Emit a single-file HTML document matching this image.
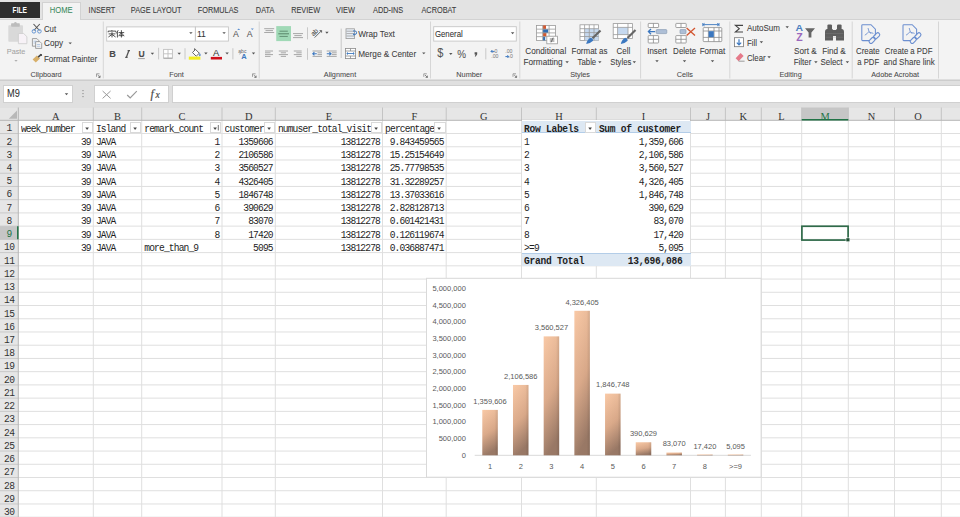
<!DOCTYPE html><html><head><meta charset="utf-8"><style>
*{margin:0;padding:0;box-sizing:border-box}
html,body{width:960px;height:517px;overflow:hidden;background:#fff}
body{position:relative;font-family:"Liberation Sans",sans-serif;color:#444}
.a{position:absolute}
.t{position:absolute;white-space:nowrap;font-size:8px;line-height:10px;color:#444}
.c{position:absolute;white-space:nowrap;font-family:"Liberation Mono",monospace;font-size:9.6px;letter-spacing:-0.85px;line-height:13px;color:#1e1e1e;transform:scaleY(1.14);transform-origin:0 9.06px}
.b{font-weight:bold}
.ct{position:absolute;white-space:nowrap;font-size:7.5px;line-height:9px;color:#595959;text-align:center}
</style></head><body>
<div class="a" style="left:0;top:0;width:960px;height:19px;background:#e3e3e3"></div>
<div class="a" style="left:0;top:2px;width:40px;height:16px;background:#2e2e2e"></div>
<div class="a" style="left:42px;top:1.5px;width:39px;height:18px;background:#f3f3f3;border:1px solid #d2d2d2;border-bottom:none"></div>
<div class="a" style="left:0;top:19px;width:960px;height:61px;background:#f3f3f3;border-top:1px solid #d2d2d2"></div>
<div class="a" style="left:0;top:80px;width:960px;height:28px;background:#e0e0e0"></div>
<div class="a" style="left:43px;top:17px;width:37px;height:3px;background:#f3f3f3"></div>
<svg class="a" style="left:0;top:0" width="960" height="90"><rect x="0" y="79.5" width="960" height="1.3" fill="#c9c9c9"/></svg>
<div class="a" style="left:3px;top:85.2px;width:70px;height:17.8px;background:#fff;border:1px solid #d0d0d0"></div>
<div class="a" style="left:94px;top:85.2px;width:75px;height:17.8px;background:#fff;border:1px solid #d0d0d0"></div>
<div class="a" style="left:171.5px;top:85.2px;width:790px;height:17.8px;background:#fff;border:1px solid #d0d0d0"></div>
<div class="a" style="left:0;top:107.5px;width:960px;height:12.799999999999997px;background:#e6e6e6"></div>
<div class="a" style="left:0;top:120.3px;width:18.3px;height:396.7px;background:#e6e6e6"></div>
<svg class="a" style="left:0;top:0" width="960" height="517">
<rect x="801.7" y="107.5" width="46.59999999999991" height="12.799999999999997" fill="#c6c6c6"/>
<rect x="0" y="226.14" width="18.3" height="13.23" fill="#c6c6c6"/>
<line x1="93.3" y1="120.3" x2="93.3" y2="517" stroke="#dfdfdf" stroke-width="1"/>
<line x1="93.3" y1="107.5" x2="93.3" y2="120.3" stroke="#c4c4c4" stroke-width="1"/>
<line x1="141.7" y1="120.3" x2="141.7" y2="517" stroke="#dfdfdf" stroke-width="1"/>
<line x1="141.7" y1="107.5" x2="141.7" y2="120.3" stroke="#c4c4c4" stroke-width="1"/>
<line x1="222.0" y1="120.3" x2="222.0" y2="517" stroke="#dfdfdf" stroke-width="1"/>
<line x1="222.0" y1="107.5" x2="222.0" y2="120.3" stroke="#c4c4c4" stroke-width="1"/>
<line x1="275.3" y1="120.3" x2="275.3" y2="517" stroke="#dfdfdf" stroke-width="1"/>
<line x1="275.3" y1="107.5" x2="275.3" y2="120.3" stroke="#c4c4c4" stroke-width="1"/>
<line x1="382.5" y1="120.3" x2="382.5" y2="517" stroke="#dfdfdf" stroke-width="1"/>
<line x1="382.5" y1="107.5" x2="382.5" y2="120.3" stroke="#c4c4c4" stroke-width="1"/>
<line x1="446.2" y1="120.3" x2="446.2" y2="517" stroke="#dfdfdf" stroke-width="1"/>
<line x1="446.2" y1="107.5" x2="446.2" y2="120.3" stroke="#c4c4c4" stroke-width="1"/>
<line x1="521.5" y1="120.3" x2="521.5" y2="517" stroke="#dfdfdf" stroke-width="1"/>
<line x1="521.5" y1="107.5" x2="521.5" y2="120.3" stroke="#c4c4c4" stroke-width="1"/>
<line x1="596.3" y1="120.3" x2="596.3" y2="517" stroke="#dfdfdf" stroke-width="1"/>
<line x1="596.3" y1="107.5" x2="596.3" y2="120.3" stroke="#c4c4c4" stroke-width="1"/>
<line x1="690.5" y1="120.3" x2="690.5" y2="517" stroke="#dfdfdf" stroke-width="1"/>
<line x1="690.5" y1="107.5" x2="690.5" y2="120.3" stroke="#c4c4c4" stroke-width="1"/>
<line x1="725.4" y1="120.3" x2="725.4" y2="517" stroke="#dfdfdf" stroke-width="1"/>
<line x1="725.4" y1="107.5" x2="725.4" y2="120.3" stroke="#c4c4c4" stroke-width="1"/>
<line x1="761.3" y1="120.3" x2="761.3" y2="517" stroke="#dfdfdf" stroke-width="1"/>
<line x1="761.3" y1="107.5" x2="761.3" y2="120.3" stroke="#c4c4c4" stroke-width="1"/>
<line x1="801.7" y1="120.3" x2="801.7" y2="517" stroke="#dfdfdf" stroke-width="1"/>
<line x1="801.7" y1="107.5" x2="801.7" y2="120.3" stroke="#c4c4c4" stroke-width="1"/>
<line x1="848.3" y1="120.3" x2="848.3" y2="517" stroke="#dfdfdf" stroke-width="1"/>
<line x1="848.3" y1="107.5" x2="848.3" y2="120.3" stroke="#c4c4c4" stroke-width="1"/>
<line x1="894.5" y1="120.3" x2="894.5" y2="517" stroke="#dfdfdf" stroke-width="1"/>
<line x1="894.5" y1="107.5" x2="894.5" y2="120.3" stroke="#c4c4c4" stroke-width="1"/>
<line x1="941.3" y1="120.3" x2="941.3" y2="517" stroke="#dfdfdf" stroke-width="1"/>
<line x1="941.3" y1="107.5" x2="941.3" y2="120.3" stroke="#c4c4c4" stroke-width="1"/>
<line x1="18.3" y1="133.53" x2="960" y2="133.53" stroke="#dfdfdf" stroke-width="1"/>
<line x1="0" y1="133.53" x2="18.3" y2="133.53" stroke="#c8c8c8" stroke-width="1"/>
<line x1="18.3" y1="146.76" x2="960" y2="146.76" stroke="#dfdfdf" stroke-width="1"/>
<line x1="0" y1="146.76" x2="18.3" y2="146.76" stroke="#c8c8c8" stroke-width="1"/>
<line x1="18.3" y1="159.98999999999998" x2="960" y2="159.98999999999998" stroke="#dfdfdf" stroke-width="1"/>
<line x1="0" y1="159.98999999999998" x2="18.3" y2="159.98999999999998" stroke="#c8c8c8" stroke-width="1"/>
<line x1="18.3" y1="173.22" x2="960" y2="173.22" stroke="#dfdfdf" stroke-width="1"/>
<line x1="0" y1="173.22" x2="18.3" y2="173.22" stroke="#c8c8c8" stroke-width="1"/>
<line x1="18.3" y1="186.45" x2="960" y2="186.45" stroke="#dfdfdf" stroke-width="1"/>
<line x1="0" y1="186.45" x2="18.3" y2="186.45" stroke="#c8c8c8" stroke-width="1"/>
<line x1="18.3" y1="199.67999999999998" x2="960" y2="199.67999999999998" stroke="#dfdfdf" stroke-width="1"/>
<line x1="0" y1="199.67999999999998" x2="18.3" y2="199.67999999999998" stroke="#c8c8c8" stroke-width="1"/>
<line x1="18.3" y1="212.91" x2="960" y2="212.91" stroke="#dfdfdf" stroke-width="1"/>
<line x1="0" y1="212.91" x2="18.3" y2="212.91" stroke="#c8c8c8" stroke-width="1"/>
<line x1="18.3" y1="226.14" x2="960" y2="226.14" stroke="#dfdfdf" stroke-width="1"/>
<line x1="0" y1="226.14" x2="18.3" y2="226.14" stroke="#c8c8c8" stroke-width="1"/>
<line x1="18.3" y1="239.36999999999998" x2="960" y2="239.36999999999998" stroke="#dfdfdf" stroke-width="1"/>
<line x1="0" y1="239.36999999999998" x2="18.3" y2="239.36999999999998" stroke="#c8c8c8" stroke-width="1"/>
<line x1="18.3" y1="252.6" x2="960" y2="252.6" stroke="#dfdfdf" stroke-width="1"/>
<line x1="0" y1="252.6" x2="18.3" y2="252.6" stroke="#c8c8c8" stroke-width="1"/>
<line x1="18.3" y1="265.83000000000004" x2="960" y2="265.83000000000004" stroke="#dfdfdf" stroke-width="1"/>
<line x1="0" y1="265.83000000000004" x2="18.3" y2="265.83000000000004" stroke="#c8c8c8" stroke-width="1"/>
<line x1="18.3" y1="279.06" x2="960" y2="279.06" stroke="#dfdfdf" stroke-width="1"/>
<line x1="0" y1="279.06" x2="18.3" y2="279.06" stroke="#c8c8c8" stroke-width="1"/>
<line x1="18.3" y1="292.29" x2="960" y2="292.29" stroke="#dfdfdf" stroke-width="1"/>
<line x1="0" y1="292.29" x2="18.3" y2="292.29" stroke="#c8c8c8" stroke-width="1"/>
<line x1="18.3" y1="305.52000000000004" x2="960" y2="305.52000000000004" stroke="#dfdfdf" stroke-width="1"/>
<line x1="0" y1="305.52000000000004" x2="18.3" y2="305.52000000000004" stroke="#c8c8c8" stroke-width="1"/>
<line x1="18.3" y1="318.75" x2="960" y2="318.75" stroke="#dfdfdf" stroke-width="1"/>
<line x1="0" y1="318.75" x2="18.3" y2="318.75" stroke="#c8c8c8" stroke-width="1"/>
<line x1="18.3" y1="331.98" x2="960" y2="331.98" stroke="#dfdfdf" stroke-width="1"/>
<line x1="0" y1="331.98" x2="18.3" y2="331.98" stroke="#c8c8c8" stroke-width="1"/>
<line x1="18.3" y1="345.21000000000004" x2="960" y2="345.21000000000004" stroke="#dfdfdf" stroke-width="1"/>
<line x1="0" y1="345.21000000000004" x2="18.3" y2="345.21000000000004" stroke="#c8c8c8" stroke-width="1"/>
<line x1="18.3" y1="358.44" x2="960" y2="358.44" stroke="#dfdfdf" stroke-width="1"/>
<line x1="0" y1="358.44" x2="18.3" y2="358.44" stroke="#c8c8c8" stroke-width="1"/>
<line x1="18.3" y1="371.67" x2="960" y2="371.67" stroke="#dfdfdf" stroke-width="1"/>
<line x1="0" y1="371.67" x2="18.3" y2="371.67" stroke="#c8c8c8" stroke-width="1"/>
<line x1="18.3" y1="384.90000000000003" x2="960" y2="384.90000000000003" stroke="#dfdfdf" stroke-width="1"/>
<line x1="0" y1="384.90000000000003" x2="18.3" y2="384.90000000000003" stroke="#c8c8c8" stroke-width="1"/>
<line x1="18.3" y1="398.13000000000005" x2="960" y2="398.13000000000005" stroke="#dfdfdf" stroke-width="1"/>
<line x1="0" y1="398.13000000000005" x2="18.3" y2="398.13000000000005" stroke="#c8c8c8" stroke-width="1"/>
<line x1="18.3" y1="411.36" x2="960" y2="411.36" stroke="#dfdfdf" stroke-width="1"/>
<line x1="0" y1="411.36" x2="18.3" y2="411.36" stroke="#c8c8c8" stroke-width="1"/>
<line x1="18.3" y1="424.59000000000003" x2="960" y2="424.59000000000003" stroke="#dfdfdf" stroke-width="1"/>
<line x1="0" y1="424.59000000000003" x2="18.3" y2="424.59000000000003" stroke="#c8c8c8" stroke-width="1"/>
<line x1="18.3" y1="437.82000000000005" x2="960" y2="437.82000000000005" stroke="#dfdfdf" stroke-width="1"/>
<line x1="0" y1="437.82000000000005" x2="18.3" y2="437.82000000000005" stroke="#c8c8c8" stroke-width="1"/>
<line x1="18.3" y1="451.05" x2="960" y2="451.05" stroke="#dfdfdf" stroke-width="1"/>
<line x1="0" y1="451.05" x2="18.3" y2="451.05" stroke="#c8c8c8" stroke-width="1"/>
<line x1="18.3" y1="464.28000000000003" x2="960" y2="464.28000000000003" stroke="#dfdfdf" stroke-width="1"/>
<line x1="0" y1="464.28000000000003" x2="18.3" y2="464.28000000000003" stroke="#c8c8c8" stroke-width="1"/>
<line x1="18.3" y1="477.51000000000005" x2="960" y2="477.51000000000005" stroke="#dfdfdf" stroke-width="1"/>
<line x1="0" y1="477.51000000000005" x2="18.3" y2="477.51000000000005" stroke="#c8c8c8" stroke-width="1"/>
<line x1="18.3" y1="490.74000000000007" x2="960" y2="490.74000000000007" stroke="#dfdfdf" stroke-width="1"/>
<line x1="0" y1="490.74000000000007" x2="18.3" y2="490.74000000000007" stroke="#c8c8c8" stroke-width="1"/>
<line x1="18.3" y1="503.97" x2="960" y2="503.97" stroke="#dfdfdf" stroke-width="1"/>
<line x1="0" y1="503.97" x2="18.3" y2="503.97" stroke="#c8c8c8" stroke-width="1"/>
<line x1="18.3" y1="517.2" x2="960" y2="517.2" stroke="#dfdfdf" stroke-width="1"/>
<line x1="0" y1="517.2" x2="18.3" y2="517.2" stroke="#c8c8c8" stroke-width="1"/>
<line x1="0" y1="120.3" x2="960" y2="120.3" stroke="#b5b5b5" stroke-width="1"/>
<line x1="18.3" y1="107.5" x2="18.3" y2="517" stroke="#b5b5b5" stroke-width="1"/>
<polygon points="17,110.6 17,118.8 8.8,118.8" fill="#b8b8b8"/>
<line x1="801.7" y1="119.8" x2="848.3" y2="119.8" stroke="#217346" stroke-width="1.5"/>
<line x1="17.8" y1="226.14" x2="17.8" y2="239.36999999999998" stroke="#217346" stroke-width="1.5"/>
</svg>
<div class="c" style="left:45.8px;width:20px;text-align:center;top:109.7px;letter-spacing:0;color:#333;font-family:'Liberation Serif',serif;font-size:10.4px;transform:scaleY(1.0)">A</div>
<div class="c" style="left:107.5px;width:20px;text-align:center;top:109.7px;letter-spacing:0;color:#333;font-family:'Liberation Serif',serif;font-size:10.4px;transform:scaleY(1.0)">B</div>
<div class="c" style="left:171.85px;width:20px;text-align:center;top:109.7px;letter-spacing:0;color:#333;font-family:'Liberation Serif',serif;font-size:10.4px;transform:scaleY(1.0)">C</div>
<div class="c" style="left:238.65px;width:20px;text-align:center;top:109.7px;letter-spacing:0;color:#333;font-family:'Liberation Serif',serif;font-size:10.4px;transform:scaleY(1.0)">D</div>
<div class="c" style="left:318.9px;width:20px;text-align:center;top:109.7px;letter-spacing:0;color:#333;font-family:'Liberation Serif',serif;font-size:10.4px;transform:scaleY(1.0)">E</div>
<div class="c" style="left:404.35px;width:20px;text-align:center;top:109.7px;letter-spacing:0;color:#333;font-family:'Liberation Serif',serif;font-size:10.4px;transform:scaleY(1.0)">F</div>
<div class="c" style="left:473.85px;width:20px;text-align:center;top:109.7px;letter-spacing:0;color:#333;font-family:'Liberation Serif',serif;font-size:10.4px;transform:scaleY(1.0)">G</div>
<div class="c" style="left:548.9px;width:20px;text-align:center;top:109.7px;letter-spacing:0;color:#333;font-family:'Liberation Serif',serif;font-size:10.4px;transform:scaleY(1.0)">H</div>
<div class="c" style="left:633.4px;width:20px;text-align:center;top:109.7px;letter-spacing:0;color:#333;font-family:'Liberation Serif',serif;font-size:10.4px;transform:scaleY(1.0)">I</div>
<div class="c" style="left:697.95px;width:20px;text-align:center;top:109.7px;letter-spacing:0;color:#333;font-family:'Liberation Serif',serif;font-size:10.4px;transform:scaleY(1.0)">J</div>
<div class="c" style="left:733.3499999999999px;width:20px;text-align:center;top:109.7px;letter-spacing:0;color:#333;font-family:'Liberation Serif',serif;font-size:10.4px;transform:scaleY(1.0)">K</div>
<div class="c" style="left:771.5px;width:20px;text-align:center;top:109.7px;letter-spacing:0;color:#333;font-family:'Liberation Serif',serif;font-size:10.4px;transform:scaleY(1.0)">L</div>
<div class="c" style="left:815.0px;width:20px;text-align:center;top:109.7px;letter-spacing:0;color:#217346;font-family:'Liberation Serif',serif;font-size:10.4px;transform:scaleY(1.0)">M</div>
<div class="c" style="left:861.4px;width:20px;text-align:center;top:109.7px;letter-spacing:0;color:#333;font-family:'Liberation Serif',serif;font-size:10.4px;transform:scaleY(1.0)">N</div>
<div class="c" style="left:907.9px;width:20px;text-align:center;top:109.7px;letter-spacing:0;color:#333;font-family:'Liberation Serif',serif;font-size:10.4px;transform:scaleY(1.0)">O</div>
<div class="c" style="left:0;width:18.3px;text-align:center;top:122.3px;letter-spacing:-0.6px;color:#333">1</div>
<div class="c" style="left:0;width:18.3px;text-align:center;top:135.53px;letter-spacing:-0.6px;color:#333">2</div>
<div class="c" style="left:0;width:18.3px;text-align:center;top:148.76px;letter-spacing:-0.6px;color:#333">3</div>
<div class="c" style="left:0;width:18.3px;text-align:center;top:161.99px;letter-spacing:-0.6px;color:#333">4</div>
<div class="c" style="left:0;width:18.3px;text-align:center;top:175.22px;letter-spacing:-0.6px;color:#333">5</div>
<div class="c" style="left:0;width:18.3px;text-align:center;top:188.45px;letter-spacing:-0.6px;color:#333">6</div>
<div class="c" style="left:0;width:18.3px;text-align:center;top:201.68px;letter-spacing:-0.6px;color:#333">7</div>
<div class="c" style="left:0;width:18.3px;text-align:center;top:214.91px;letter-spacing:-0.6px;color:#333">8</div>
<div class="c" style="left:0;width:18.3px;text-align:center;top:228.14px;letter-spacing:-0.6px;color:#217346">9</div>
<div class="c" style="left:0;width:18.3px;text-align:center;top:241.37px;letter-spacing:-0.6px;color:#333">10</div>
<div class="c" style="left:0;width:18.3px;text-align:center;top:254.60000000000002px;letter-spacing:-0.6px;color:#333">11</div>
<div class="c" style="left:0;width:18.3px;text-align:center;top:267.83px;letter-spacing:-0.6px;color:#333">12</div>
<div class="c" style="left:0;width:18.3px;text-align:center;top:281.06px;letter-spacing:-0.6px;color:#333">13</div>
<div class="c" style="left:0;width:18.3px;text-align:center;top:294.29px;letter-spacing:-0.6px;color:#333">14</div>
<div class="c" style="left:0;width:18.3px;text-align:center;top:307.52px;letter-spacing:-0.6px;color:#333">15</div>
<div class="c" style="left:0;width:18.3px;text-align:center;top:320.75px;letter-spacing:-0.6px;color:#333">16</div>
<div class="c" style="left:0;width:18.3px;text-align:center;top:333.98px;letter-spacing:-0.6px;color:#333">17</div>
<div class="c" style="left:0;width:18.3px;text-align:center;top:347.21px;letter-spacing:-0.6px;color:#333">18</div>
<div class="c" style="left:0;width:18.3px;text-align:center;top:360.44px;letter-spacing:-0.6px;color:#333">19</div>
<div class="c" style="left:0;width:18.3px;text-align:center;top:373.67px;letter-spacing:-0.6px;color:#333">20</div>
<div class="c" style="left:0;width:18.3px;text-align:center;top:386.90000000000003px;letter-spacing:-0.6px;color:#333">21</div>
<div class="c" style="left:0;width:18.3px;text-align:center;top:400.13px;letter-spacing:-0.6px;color:#333">22</div>
<div class="c" style="left:0;width:18.3px;text-align:center;top:413.36px;letter-spacing:-0.6px;color:#333">23</div>
<div class="c" style="left:0;width:18.3px;text-align:center;top:426.59000000000003px;letter-spacing:-0.6px;color:#333">24</div>
<div class="c" style="left:0;width:18.3px;text-align:center;top:439.82px;letter-spacing:-0.6px;color:#333">25</div>
<div class="c" style="left:0;width:18.3px;text-align:center;top:453.05px;letter-spacing:-0.6px;color:#333">26</div>
<div class="c" style="left:0;width:18.3px;text-align:center;top:466.28000000000003px;letter-spacing:-0.6px;color:#333">27</div>
<div class="c" style="left:0;width:18.3px;text-align:center;top:479.51000000000005px;letter-spacing:-0.6px;color:#333">28</div>
<div class="c" style="left:0;width:18.3px;text-align:center;top:492.74px;letter-spacing:-0.6px;color:#333">29</div>
<div class="c" style="left:0;width:18.3px;text-align:center;top:505.97px;letter-spacing:-0.6px;color:#333">30</div>
<div class="c" style="left:20.90px;top:122.67px;width:60.80px;overflow:hidden">week_number</div>
<div class="a" style="left:81.50px;top:121.8px;width:11.2px;height:11.2px;background:#fff;border:1px solid #d9d9d9"></div>
<svg class="a" style="left:81.50px;top:121.8px" width="12" height="12"><polygon points="3.3,5.6 6.9,5.6 5.1,7.9" fill="#444"/></svg>
<div class="c" style="left:95.90px;top:122.67px;width:34.20px;overflow:hidden">Island</div>
<div class="a" style="left:129.90px;top:121.8px;width:11.2px;height:11.2px;background:#fff;border:1px solid #d9d9d9"></div>
<svg class="a" style="left:129.90px;top:121.8px" width="12" height="12"><polygon points="3.3,5.6 6.9,5.6 5.1,7.9" fill="#444"/></svg>
<div class="c" style="left:144.30px;top:122.67px;width:66.10px;overflow:hidden">remark_count</div>
<div class="a" style="left:210.20px;top:121.8px;width:11.2px;height:11.2px;background:#fff;border:1px solid #d9d9d9"></div>
<svg class="a" style="left:210.20px;top:121.8px" width="12" height="12"><polygon points="3.3,5.6 6.9,5.6 5.1,7.9" fill="#444"/><line x1="8.3" y1="3" x2="8.3" y2="8.5" stroke="#666" stroke-width="0.9"/></svg>
<div class="c" style="left:224.60px;top:122.67px;width:39.10px;overflow:hidden">customer</div>
<div class="a" style="left:263.50px;top:121.8px;width:11.2px;height:11.2px;background:#fff;border:1px solid #d9d9d9"></div>
<svg class="a" style="left:263.50px;top:121.8px" width="12" height="12"><polygon points="3.3,5.6 6.9,5.6 5.1,7.9" fill="#444"/></svg>
<div class="c" style="left:277.90px;top:122.67px;width:93.00px;overflow:hidden">numuser_total_visit</div>
<div class="a" style="left:370.70px;top:121.8px;width:11.2px;height:11.2px;background:#fff;border:1px solid #d9d9d9"></div>
<svg class="a" style="left:370.70px;top:121.8px" width="12" height="12"><polygon points="3.3,5.6 6.9,5.6 5.1,7.9" fill="#444"/></svg>
<div class="c" style="left:385.10px;top:122.67px;width:49.50px;overflow:hidden">percentage</div>
<div class="a" style="left:434.40px;top:121.8px;width:11.2px;height:11.2px;background:#fff;border:1px solid #d9d9d9"></div>
<svg class="a" style="left:434.40px;top:121.8px" width="12" height="12"><polygon points="3.3,5.6 6.9,5.6 5.1,7.9" fill="#444"/></svg>
<div class="c" style="top:135.90px;right:869.25px;">39</div>
<div class="c" style="top:135.90px;left:95.90px;">JAVA</div>
<div class="c" style="top:135.90px;right:740.55px;">1</div>
<div class="c" style="top:135.90px;right:687.25px;">1359606</div>
<div class="c" style="top:135.90px;right:580.05px;">13812278</div>
<div class="c" style="top:135.90px;right:516.35px;">9.843459565</div>
<div class="c" style="top:149.13px;right:869.25px;">39</div>
<div class="c" style="top:149.13px;left:95.90px;">JAVA</div>
<div class="c" style="top:149.13px;right:740.55px;">2</div>
<div class="c" style="top:149.13px;right:687.25px;">2106586</div>
<div class="c" style="top:149.13px;right:580.05px;">13812278</div>
<div class="c" style="top:149.13px;right:516.35px;">15.25154649</div>
<div class="c" style="top:162.36px;right:869.25px;">39</div>
<div class="c" style="top:162.36px;left:95.90px;">JAVA</div>
<div class="c" style="top:162.36px;right:740.55px;">3</div>
<div class="c" style="top:162.36px;right:687.25px;">3560527</div>
<div class="c" style="top:162.36px;right:580.05px;">13812278</div>
<div class="c" style="top:162.36px;right:516.35px;">25.77798535</div>
<div class="c" style="top:175.59px;right:869.25px;">39</div>
<div class="c" style="top:175.59px;left:95.90px;">JAVA</div>
<div class="c" style="top:175.59px;right:740.55px;">4</div>
<div class="c" style="top:175.59px;right:687.25px;">4326405</div>
<div class="c" style="top:175.59px;right:580.05px;">13812278</div>
<div class="c" style="top:175.59px;right:516.35px;">31.32289257</div>
<div class="c" style="top:188.82px;right:869.25px;">39</div>
<div class="c" style="top:188.82px;left:95.90px;">JAVA</div>
<div class="c" style="top:188.82px;right:740.55px;">5</div>
<div class="c" style="top:188.82px;right:687.25px;">1846748</div>
<div class="c" style="top:188.82px;right:580.05px;">13812278</div>
<div class="c" style="top:188.82px;right:516.35px;">13.37033616</div>
<div class="c" style="top:202.05px;right:869.25px;">39</div>
<div class="c" style="top:202.05px;left:95.90px;">JAVA</div>
<div class="c" style="top:202.05px;right:740.55px;">6</div>
<div class="c" style="top:202.05px;right:687.25px;">390629</div>
<div class="c" style="top:202.05px;right:580.05px;">13812278</div>
<div class="c" style="top:202.05px;right:516.35px;">2.828128713</div>
<div class="c" style="top:215.28px;right:869.25px;">39</div>
<div class="c" style="top:215.28px;left:95.90px;">JAVA</div>
<div class="c" style="top:215.28px;right:740.55px;">7</div>
<div class="c" style="top:215.28px;right:687.25px;">83070</div>
<div class="c" style="top:215.28px;right:580.05px;">13812278</div>
<div class="c" style="top:215.28px;right:516.35px;">0.601421431</div>
<div class="c" style="top:228.51px;right:869.25px;">39</div>
<div class="c" style="top:228.51px;left:95.90px;">JAVA</div>
<div class="c" style="top:228.51px;right:740.55px;">8</div>
<div class="c" style="top:228.51px;right:687.25px;">17420</div>
<div class="c" style="top:228.51px;right:580.05px;">13812278</div>
<div class="c" style="top:228.51px;right:516.35px;">0.126119674</div>
<div class="c" style="top:241.74px;right:869.25px;">39</div>
<div class="c" style="top:241.74px;left:95.90px;">JAVA</div>
<div class="c" style="top:241.74px;left:144.30px;">more_than_9</div>
<div class="c" style="top:241.74px;right:687.25px;">5095</div>
<div class="c" style="top:241.74px;right:580.05px;">13812278</div>
<div class="c" style="top:241.74px;right:516.35px;">0.036887471</div>
<div class="a" style="left:522.10px;top:120.30px;width:167.80px;height:132.30px;background:#fff"></div>
<div class="a" style="left:522.00px;top:120.80px;width:168.50px;height:12.43px;background:#dde8f3;border-bottom:1px solid #b3cde8"></div>
<div class="a" style="left:522.00px;top:252.90px;width:168.50px;height:12.63px;background:#dde8f3;border-top:1px solid #b3cde8"></div>
<div class="c b" style="top:122.67px;letter-spacing:-0.29px;left:524.10px;">Row Labels</div>
<div class="a" style="left:584.50px;top:121.8px;width:11.2px;height:11.2px;background:#fff;border:1px solid #d9d9d9"></div>
<svg class="a" style="left:584.50px;top:121.8px" width="12" height="12"><polygon points="3.3,5.6 6.9,5.6 5.1,7.9" fill="#444"/></svg>
<div class="c b" style="top:122.67px;letter-spacing:-0.29px;left:598.90px;">Sum of customer</div>
<div class="c" style="top:135.90px;left:524.10px;">1</div>
<div class="c" style="top:135.90px;right:277.05px;">1,359,606</div>
<div class="c" style="top:149.13px;left:524.10px;">2</div>
<div class="c" style="top:149.13px;right:277.05px;">2,106,586</div>
<div class="c" style="top:162.36px;left:524.10px;">3</div>
<div class="c" style="top:162.36px;right:277.05px;">3,560,527</div>
<div class="c" style="top:175.59px;left:524.10px;">4</div>
<div class="c" style="top:175.59px;right:277.05px;">4,326,405</div>
<div class="c" style="top:188.82px;left:524.10px;">5</div>
<div class="c" style="top:188.82px;right:277.05px;">1,846,748</div>
<div class="c" style="top:202.05px;left:524.10px;">6</div>
<div class="c" style="top:202.05px;right:277.05px;">390,629</div>
<div class="c" style="top:215.28px;left:524.10px;">7</div>
<div class="c" style="top:215.28px;right:277.05px;">83,070</div>
<div class="c" style="top:228.51px;left:524.10px;">8</div>
<div class="c" style="top:228.51px;right:277.05px;">17,420</div>
<div class="c" style="top:241.74px;left:524.10px;">&gt;=9</div>
<div class="c" style="top:241.74px;right:277.05px;">5,095</div>
<div class="c b" style="top:254.97px;letter-spacing:-0.29px;left:524.10px;">Grand Total</div>
<div class="c b" style="top:254.97px;letter-spacing:-0.29px;right:277.61px;">13,696,086</div>
<svg class="a" style="left:0;top:0" width="960" height="517"><rect x="801.90" y="226.24" width="46.20" height="13.83" fill="none" stroke="#2f6a49" stroke-width="1.7"/><rect x="845.70" y="237.57" width="4" height="4" fill="#fff"/><rect x="846.30" y="238.17" width="3.2" height="3.2" fill="#1f4f33"/></svg>
<svg class="a" style="left:0;top:0" width="960" height="517">
<defs><linearGradient id="g" x1="0" y1="0" x2="0.2" y2="1" gradientUnits="objectBoundingBox"><stop offset="0" stop-color="#f9c9a6"/><stop offset="0.55" stop-color="#dcab8b"/><stop offset="1" stop-color="#9b7a67"/></linearGradient><linearGradient id="gh" x1="0" y1="0" x2="1" y2="0"><stop offset="0" stop-color="#000" stop-opacity="0"/><stop offset="0.8" stop-color="#000" stop-opacity="0.02"/><stop offset="1" stop-color="#000" stop-opacity="0.12"/></linearGradient></defs>
<rect x="426.5" y="278.3" width="334.6" height="198.89999999999998" fill="#fff" stroke="#d9d9d9" stroke-width="1"/>
<line x1="474.7" y1="455.3" x2="750.9" y2="455.3" stroke="#d9d9d9" stroke-width="1"/>
<rect x="482.29" y="409.89" width="15.5" height="45.41" fill="url(#g)"/>
<rect x="482.29" y="409.89" width="15.5" height="45.41" fill="url(#gh)"/>
<rect x="512.98" y="384.94" width="15.5" height="70.36" fill="url(#g)"/>
<rect x="512.98" y="384.94" width="15.5" height="70.36" fill="url(#gh)"/>
<rect x="543.67" y="336.38" width="15.5" height="118.92" fill="url(#g)"/>
<rect x="543.67" y="336.38" width="15.5" height="118.92" fill="url(#gh)"/>
<rect x="574.36" y="310.80" width="15.5" height="144.50" fill="url(#g)"/>
<rect x="574.36" y="310.80" width="15.5" height="144.50" fill="url(#gh)"/>
<rect x="605.05" y="393.62" width="15.5" height="61.68" fill="url(#g)"/>
<rect x="605.05" y="393.62" width="15.5" height="61.68" fill="url(#gh)"/>
<rect x="635.74" y="442.25" width="15.5" height="13.05" fill="url(#g)"/>
<rect x="635.74" y="442.25" width="15.5" height="13.05" fill="url(#gh)"/>
<rect x="666.43" y="452.53" width="15.5" height="2.77" fill="url(#g)"/>
<rect x="666.43" y="452.53" width="15.5" height="2.77" fill="url(#gh)"/>
<rect x="697.12" y="454.50" width="15.5" height="0.80" fill="url(#g)"/>
<rect x="697.12" y="454.50" width="15.5" height="0.80" fill="url(#gh)"/>
<rect x="727.81" y="454.50" width="15.5" height="0.80" fill="url(#g)"/>
<rect x="727.81" y="454.50" width="15.5" height="0.80" fill="url(#gh)"/>
</svg>
<div class="ct" style="right:494.2px;top:450.80px;text-align:right">0</div>
<div class="ct" style="right:494.2px;top:434.10px;text-align:right">500,000</div>
<div class="ct" style="right:494.2px;top:417.40px;text-align:right">1,000,000</div>
<div class="ct" style="right:494.2px;top:400.70px;text-align:right">1,500,000</div>
<div class="ct" style="right:494.2px;top:384.00px;text-align:right">2,000,000</div>
<div class="ct" style="right:494.2px;top:367.30px;text-align:right">2,500,000</div>
<div class="ct" style="right:494.2px;top:350.60px;text-align:right">3,000,000</div>
<div class="ct" style="right:494.2px;top:333.90px;text-align:right">3,500,000</div>
<div class="ct" style="right:494.2px;top:317.20px;text-align:right">4,000,000</div>
<div class="ct" style="right:494.2px;top:300.50px;text-align:right">4,500,000</div>
<div class="ct" style="right:494.2px;top:283.80px;text-align:right">5,000,000</div>
<div class="ct" style="left:465.04px;width:50px;top:396.69px">1,359,606</div>
<div class="ct" style="left:465.04px;width:50px;top:461.80px">1</div>
<div class="ct" style="left:495.73px;width:50px;top:371.74px">2,106,586</div>
<div class="ct" style="left:495.73px;width:50px;top:461.80px">2</div>
<div class="ct" style="left:526.42px;width:50px;top:323.18px">3,560,527</div>
<div class="ct" style="left:526.42px;width:50px;top:461.80px">3</div>
<div class="ct" style="left:557.11px;width:50px;top:297.60px">4,326,405</div>
<div class="ct" style="left:557.11px;width:50px;top:461.80px">4</div>
<div class="ct" style="left:587.80px;width:50px;top:380.42px">1,846,748</div>
<div class="ct" style="left:587.80px;width:50px;top:461.80px">5</div>
<div class="ct" style="left:618.49px;width:50px;top:429.05px">390,629</div>
<div class="ct" style="left:618.49px;width:50px;top:461.80px">6</div>
<div class="ct" style="left:649.18px;width:50px;top:439.33px">83,070</div>
<div class="ct" style="left:649.18px;width:50px;top:461.80px">7</div>
<div class="ct" style="left:679.87px;width:50px;top:441.52px">17,420</div>
<div class="ct" style="left:679.87px;width:50px;top:461.80px">8</div>
<div class="ct" style="left:710.56px;width:50px;top:441.93px">5,095</div>
<div class="ct" style="left:710.56px;width:50px;top:461.80px">&gt;=9</div>
<svg class="a" style="left:0;top:0" width="960" height="110" font-family="Liberation Sans, sans-serif">
<text transform="translate(12.60,13.20) scale(1,1.25)" font-size="6.65" fill="#fff" font-weight="bold">FILE</text>
<text transform="translate(49.85,13.20) scale(1,1.25)" font-size="7.60" fill="#3b8a5e" stroke="#3b8a5e" stroke-width="0.06">HOME</text>
<text transform="translate(88.59,13.20) scale(1,1.25)" font-size="7.35" fill="#3a3a3a" stroke="#3a3a3a" stroke-width="0.06">INSERT</text>
<text transform="translate(130.86,13.20) scale(1,1.25)" font-size="7.35" fill="#3a3a3a" stroke="#3a3a3a" stroke-width="0.06">PAGE LAYOUT</text>
<text transform="translate(197.71,13.20) scale(1,1.25)" font-size="7.35" fill="#3a3a3a" stroke="#3a3a3a" stroke-width="0.06">FORMULAS</text>
<text transform="translate(255.86,13.20) scale(1,1.25)" font-size="7.35" fill="#3a3a3a" stroke="#3a3a3a" stroke-width="0.06">DATA</text>
<text transform="translate(291.13,13.20) scale(1,1.25)" font-size="7.35" fill="#3a3a3a" stroke="#3a3a3a" stroke-width="0.06">REVIEW</text>
<text transform="translate(336.11,13.20) scale(1,1.25)" font-size="7.35" fill="#3a3a3a" stroke="#3a3a3a" stroke-width="0.06">VIEW</text>
<text transform="translate(373.02,13.20) scale(1,1.25)" font-size="7.35" fill="#3a3a3a" stroke="#3a3a3a" stroke-width="0.06">ADD-INS</text>
<text transform="translate(421.46,13.20) scale(1,1.25)" font-size="7.35" fill="#3a3a3a" stroke="#3a3a3a" stroke-width="0.06">ACROBAT</text>
<line x1="103.3" y1="21.5" x2="103.3" y2="78.5" stroke="#d6d6d6" stroke-width="1"/>
<line x1="259.2" y1="21.5" x2="259.2" y2="78.5" stroke="#d6d6d6" stroke-width="1"/>
<line x1="430.5" y1="21.5" x2="430.5" y2="78.5" stroke="#d6d6d6" stroke-width="1"/>
<line x1="519.8" y1="21.5" x2="519.8" y2="78.5" stroke="#d6d6d6" stroke-width="1"/>
<line x1="640.6" y1="21.5" x2="640.6" y2="78.5" stroke="#d6d6d6" stroke-width="1"/>
<line x1="729.8" y1="21.5" x2="729.8" y2="78.5" stroke="#d6d6d6" stroke-width="1"/>
<line x1="852.2" y1="21.5" x2="852.2" y2="78.5" stroke="#d6d6d6" stroke-width="1"/>
<line x1="938.5" y1="21.5" x2="938.5" y2="78.5" stroke="#d6d6d6" stroke-width="1"/>
<text transform="translate(30.48,77.20) scale(1,1.1)" font-size="7.30" fill="#4a4a4a" stroke="#4a4a4a" stroke-width="0.06">Clipboard</text>
<text transform="translate(169.20,77.20) scale(1,1.1)" font-size="7.30" fill="#4a4a4a" stroke="#4a4a4a" stroke-width="0.06">Font</text>
<text transform="translate(323.78,77.20) scale(1,1.1)" font-size="7.30" fill="#4a4a4a" stroke="#4a4a4a" stroke-width="0.06">Alignment</text>
<text transform="translate(456.32,77.20) scale(1,1.1)" font-size="7.30" fill="#4a4a4a" stroke="#4a4a4a" stroke-width="0.06">Number</text>
<text transform="translate(570.15,77.20) scale(1,1.1)" font-size="7.30" fill="#4a4a4a" stroke="#4a4a4a" stroke-width="0.06">Styles</text>
<text transform="translate(676.73,77.20) scale(1,1.1)" font-size="7.30" fill="#4a4a4a" stroke="#4a4a4a" stroke-width="0.06">Cells</text>
<text transform="translate(779.41,77.20) scale(1,1.1)" font-size="7.30" fill="#4a4a4a" stroke="#4a4a4a" stroke-width="0.06">Editing</text>
<text transform="translate(871.26,77.20) scale(1,1.1)" font-size="7.30" fill="#4a4a4a" stroke="#4a4a4a" stroke-width="0.06">Adobe Acrobat</text>
<path d="M96.5,73.8 h3 M96.5,73.8 v3" stroke="#8a8a8a" stroke-width="0.8" fill="none"/><path d="M97.7,75.0 L100.1,77.39999999999999 M100.1,75.6 V77.39999999999999 H98.3" stroke="#666" stroke-width="0.8" fill="none"/>
<path d="M252.5,73.8 h3 M252.5,73.8 v3" stroke="#8a8a8a" stroke-width="0.8" fill="none"/><path d="M253.7,75.0 L256.1,77.39999999999999 M256.1,75.6 V77.39999999999999 H254.3" stroke="#666" stroke-width="0.8" fill="none"/>
<path d="M423.8,73.8 h3 M423.8,73.8 v3" stroke="#8a8a8a" stroke-width="0.8" fill="none"/><path d="M425.0,75.0 L427.40000000000003,77.39999999999999 M427.40000000000003,75.6 V77.39999999999999 H425.6" stroke="#666" stroke-width="0.8" fill="none"/>
<path d="M513,73.8 h3 M513,73.8 v3" stroke="#8a8a8a" stroke-width="0.8" fill="none"/><path d="M514.2,75.0 L516.6,77.39999999999999 M516.6,75.6 V77.39999999999999 H514.8" stroke="#666" stroke-width="0.8" fill="none"/>
<rect x="8.3" y="25.3" width="14.7" height="16.4" rx="0.8" fill="#d9d9d9"/>
<rect x="11.1" y="23.3" width="8.7" height="3.4" rx="0.6" fill="#bcbcbc"/>
<circle cx="15.4" cy="23.2" r="1.3" fill="#bcbcbc"/>
<path d="M18.4,33.5 h5.3 l3.2,3.2 v7 h-8.5 z" fill="#f7f2f7" stroke="#cfcfcf" stroke-width="0.9"/>
<text transform="translate(6.80,53.80) scale(1,1.1)" font-size="7.28" fill="#a3a3a3" stroke="#a3a3a3" stroke-width="0.06">Paste</text>
<polygon points="14.30,59.95 17.70,59.95 16.00,61.85" fill="#b0b0b0"/>
<path d="M33.5,24 L39.5,30.5 M39.8,24 L33.8,30.5" stroke="#555" stroke-width="1.1" fill="none"/>
<circle cx="33.9" cy="31.3" r="1.8" fill="none" stroke="#5b8fd0" stroke-width="0.9"/>
<circle cx="39.4" cy="31.3" r="1.8" fill="none" stroke="#5b8fd0" stroke-width="0.9"/>
<text transform="translate(44.00,31.60) scale(1,1.1)" font-size="7.78" fill="#404040" stroke="#404040" stroke-width="0.06">Cut</text>
<path d="M32.4,38.6 h4.5 l1.8,1.8 v5.8 h-6.3 z" fill="#f4f4f4" stroke="#8a8a8a" stroke-width="0.8"/>
<path d="M35.6,41.6 h4.3 l1.8,1.8 v5 h-6.1 z" fill="#f4f4f4" stroke="#8a8a8a" stroke-width="0.8"/>
<path d="M33.5,41.2 h3 M33.5,43 h2 M36.8,44.5 h3.4 M36.8,46.3 h3.4" stroke="#9cb8dc" stroke-width="0.7"/>
<text transform="translate(44.00,46.10) scale(1,1.1)" font-size="8.18" fill="#404040" stroke="#404040" stroke-width="0.06">Copy</text>
<polygon points="68.50,42.45 71.90,42.45 70.20,44.35" fill="#555"/>
<path d="M32.6,59.5 L36.8,55.6 L40,58.6 L35.8,62.4 z" fill="#d8b06a"/>
<path d="M38.2,57.2 L41.2,54.4" stroke="#444" stroke-width="1.6"/>
<circle cx="41.2" cy="55" r="0.9" fill="#444"/>
<text transform="translate(43.90,62.00) scale(1,1.1)" font-size="8.06" fill="#404040" stroke="#404040" stroke-width="0.06">Format Painter</text>
<rect x="106.7" y="26.9" width="88.6" height="14.2" fill="#fff" stroke="#c6c6c6" stroke-width="0.9"/>
<rect x="195.5" y="26.9" width="32.9" height="14.2" fill="#fff" stroke="#c6c6c6" stroke-width="0.9"/>
<g stroke="#333" stroke-width="0.85" fill="none"><path d="M111.9,30.1 v1 M108.2,32.3 v-1.2 h7.6 v1.2 M108.6,33.9 h6.8 M112,32.2 v5.2 M111.8,34.6 L108.4,37 M112.2,34.6 L115.6,37"/><path d="M118.2,30.2 L116.4,33.4 M117.4,32.2 v5.3 M118.6,32.6 h5.6 M121.4,30.2 v7.3 M121.2,33 L118.6,36.2 M121.6,33 L124.2,36.2 M119.6,35.7 h3.6"/></g>
<polygon points="189.20,32.15 192.60,32.15 190.90,34.05" fill="#555"/>
<text transform="translate(196.98,36.90) scale(1,1.0)" font-size="8.60" fill="#333" stroke="#333" stroke-width="0.06">11</text>
<polygon points="222.40,32.15 225.80,32.15 224.10,34.05" fill="#555"/>
<text transform="translate(232.90,36.90) scale(1,1.1)" font-size="8.73" fill="#555" stroke="#555" stroke-width="0.06">A</text>
<polygon points="237.2,30 240.2,30 238.7,28.4" fill="#5b8fd0"/>
<text transform="translate(246.70,36.90) scale(1,1.1)" font-size="8.66" fill="#555" stroke="#555" stroke-width="0.06">A</text>
<polygon points="250.8,28.4 253.8,28.4 252.3,30" fill="#5b8fd0"/>
<text transform="translate(109.21,57.30) scale(1,1.02)" font-size="9.20" fill="#4a4a4a" font-weight="bold" stroke="#4a4a4a" stroke-width="0.1">B</text>
<path d="M127.6,50.7 h2.4 M125.2,57.3 h2.4 M128.8,50.7 L126.4,57.3" stroke="#555" stroke-width="1.3" fill="none"/>
<text transform="translate(138.40,57.30) scale(1,1.05)" font-size="8.60" fill="#4a4a4a" font-weight="bold" stroke="#4a4a4a" stroke-width="0.1">U</text>
<line x1="138.2" y1="58.6" x2="144.8" y2="58.6" stroke="#888" stroke-width="0.8"/>
<polygon points="150.70,52.85 154.10,52.85 152.40,54.75" fill="#555"/>
<line x1="158.6" y1="47.8" x2="158.6" y2="59.4" stroke="#c8c8c8" stroke-width="1"/>
<rect x="163.6" y="49.4" width="8.8" height="8.8" fill="#fff" stroke="#c0c0c0" stroke-width="0.9"/>
<path d="M168,49.4 v8.8 M163.6,53.8 h8.8" stroke="#c0c0c0" stroke-width="0.9"/>
<path d="M163.6,58.2 h8.8" stroke="#a0a0a0" stroke-width="0.9"/>
<polygon points="177.50,52.85 180.90,52.85 179.20,54.75" fill="#555"/>
<line x1="185" y1="48.2" x2="185" y2="59.4" stroke="#c8c8c8" stroke-width="1"/>
<path d="M192.5,52.5 L195.5,49.4 L199.3,53.2 L196.2,56.2 z" fill="#fff" stroke="#555" stroke-width="0.9"/>
<path d="M194.6,48.3 v2.2" stroke="#555" stroke-width="0.9"/>
<path d="M199.5,53.5 q1.2,1.5 0,2.6" stroke="#3c78c0" stroke-width="1.2" fill="none"/>
<rect x="188.8" y="56.6" width="11.6" height="3.1" fill="#f2ee22"/>
<polygon points="204.20,52.55 207.60,52.55 205.90,54.45" fill="#555"/>
<text transform="translate(212.90,56.00) scale(1,1.0)" font-size="9.40" fill="#383838" stroke="#383838" stroke-width="0.06">A</text>
<rect x="210.8" y="56.9" width="11.2" height="2.6" fill="#d00f1b"/>
<polygon points="225.40,52.55 228.80,52.55 227.10,54.45" fill="#555"/>
<line x1="232.9" y1="48.2" x2="232.9" y2="59.4" stroke="#c8c8c8" stroke-width="1"/>
<text transform="translate(238.30,52.60) scale(1,1.0)" font-size="5.03" fill="#666">abc</text>
<text transform="translate(241.30,58.60) scale(1,1.0)" font-size="7.50" fill="#3c78c0" font-weight="bold">A</text>
<path d="M239.2,54.2 L241.6,52.6" stroke="#888" stroke-width="0.6"/>
<polygon points="251.80,52.55 255.20,52.55 253.50,54.45" fill="#555"/>
<line x1="264.20" y1="28.70" x2="274.20" y2="28.70" stroke="#8f8f8f" stroke-width="0.75"/><line x1="265.50" y1="30.60" x2="273.00" y2="30.60" stroke="#8f8f8f" stroke-width="0.75"/><line x1="264.20" y1="32.50" x2="274.20" y2="32.50" stroke="#8f8f8f" stroke-width="0.75"/>
<rect x="276.25" y="26.1" width="14.75" height="15" fill="#a0d9b6"/>
<line x1="279.50" y1="31.20" x2="287.80" y2="31.20" stroke="#4f7a5e" stroke-width="0.75"/><line x1="278.30" y1="33.80" x2="289.00" y2="33.80" stroke="#4f7a5e" stroke-width="0.9"/><line x1="279.50" y1="36.40" x2="287.80" y2="36.40" stroke="#4f7a5e" stroke-width="0.75"/>
<line x1="293.00" y1="33.60" x2="303.00" y2="33.60" stroke="#8f8f8f" stroke-width="0.75"/><line x1="294.30" y1="35.60" x2="301.70" y2="35.60" stroke="#8f8f8f" stroke-width="0.75"/><line x1="293.00" y1="37.60" x2="303.00" y2="37.60" stroke="#8f8f8f" stroke-width="0.75"/>
<line x1="307.5" y1="27.3" x2="307.5" y2="39.4" stroke="#c8c8c8" stroke-width="1"/>
<text x="0" y="0" font-size="6.8" fill="#555" stroke="#555" stroke-width="0.1" transform="translate(313.4,36.6) rotate(-45)">ab</text>
<path d="M314.6,37.6 L321.4,30.8 M319.6,30.6 L321.6,30.6 L321.6,32.6" stroke="#555" stroke-width="0.9" fill="none"/>
<polygon points="325.20,31.85 328.60,31.85 326.90,33.75" fill="#555"/>
<line x1="265.00" y1="51.00" x2="273.00" y2="51.00" stroke="#8f8f8f" stroke-width="0.75"/><line x1="265.00" y1="52.80" x2="270.50" y2="52.80" stroke="#8f8f8f" stroke-width="0.75"/><line x1="265.00" y1="54.60" x2="273.00" y2="54.60" stroke="#8f8f8f" stroke-width="0.75"/><line x1="265.00" y1="56.40" x2="270.50" y2="56.40" stroke="#8f8f8f" stroke-width="0.75"/>
<line x1="278.80" y1="51.00" x2="288.00" y2="51.00" stroke="#8f8f8f" stroke-width="0.75"/><line x1="280.80" y1="52.80" x2="286.00" y2="52.80" stroke="#8f8f8f" stroke-width="0.75"/><line x1="278.80" y1="54.60" x2="288.00" y2="54.60" stroke="#8f8f8f" stroke-width="0.75"/><line x1="280.80" y1="56.40" x2="286.00" y2="56.40" stroke="#8f8f8f" stroke-width="0.75"/>
<line x1="293.80" y1="51.00" x2="301.70" y2="51.00" stroke="#8f8f8f" stroke-width="0.75"/><line x1="296.30" y1="52.80" x2="301.70" y2="52.80" stroke="#8f8f8f" stroke-width="0.75"/><line x1="293.80" y1="54.60" x2="301.70" y2="54.60" stroke="#8f8f8f" stroke-width="0.75"/><line x1="296.30" y1="56.40" x2="301.70" y2="56.40" stroke="#8f8f8f" stroke-width="0.75"/>
<line x1="307.5" y1="48.2" x2="307.5" y2="59.8" stroke="#c8c8c8" stroke-width="1"/>
<line x1="312.50" y1="51.00" x2="322.00" y2="51.00" stroke="#8f8f8f" stroke-width="0.75"/><line x1="317.50" y1="52.80" x2="322.00" y2="52.80" stroke="#8f8f8f" stroke-width="0.75"/><line x1="317.50" y1="54.60" x2="322.00" y2="54.60" stroke="#8f8f8f" stroke-width="0.75"/><line x1="312.50" y1="56.40" x2="322.00" y2="56.40" stroke="#8f8f8f" stroke-width="0.75"/>
<path d="M312.8,53.7 h4 M314.4,52.1 L312.8,53.7 L314.4,55.3" stroke="#3c78c0" stroke-width="1.1" fill="none"/>
<line x1="326.70" y1="51.00" x2="336.70" y2="51.00" stroke="#8f8f8f" stroke-width="0.75"/><line x1="331.80" y1="52.80" x2="336.70" y2="52.80" stroke="#8f8f8f" stroke-width="0.75"/><line x1="331.80" y1="54.60" x2="336.70" y2="54.60" stroke="#8f8f8f" stroke-width="0.75"/><line x1="326.70" y1="56.40" x2="336.70" y2="56.40" stroke="#8f8f8f" stroke-width="0.75"/>
<path d="M326.8,53.7 h4 M329.4,52.1 L331,53.7 L329.4,55.3" stroke="#3c78c0" stroke-width="1.1" fill="none"/>
<line x1="341.2" y1="28.6" x2="341.2" y2="58" stroke="#c8c8c8" stroke-width="1"/>
<rect x="346" y="28.8" width="8.5" height="9.8" fill="#e8eef6" stroke="#9a9a9a" stroke-width="0.8"/>
<line x1="346.5" y1="31.2" x2="354" y2="31.2" stroke="#9a9a9a" stroke-width="0.8"/><line x1="346.5" y1="33.6" x2="354" y2="33.6" stroke="#9a9a9a" stroke-width="0.8"/><line x1="346.5" y1="36" x2="354" y2="36" stroke="#9a9a9a" stroke-width="0.8"/>
<path d="M353,31 h2 q1.6,0 1.6,1.7 q0,1.7 -1.6,1.7 h-1.5 M354.4,33.3 l-1.2,1.1 l1.2,1.1" stroke="#3c78c0" stroke-width="1" fill="none"/>
<text transform="translate(358.20,36.80) scale(1,1.1)" font-size="8.22" fill="#404040" stroke="#404040" stroke-width="0.06">Wrap Text</text>
<rect x="345.4" y="48.4" width="10.2" height="10.2" fill="#fff" stroke="#8c8c8c" stroke-width="0.8"/>
<path d="M345.4,51 h10.2 M345.4,56 h10.2 M350.5,48.4 v2.6 M350.5,56 v2.6" stroke="#8c8c8c" stroke-width="0.8"/>
<path d="M346.8,53.5 h7.4 M348,52.4 l-1.2,1.1 l1.2,1.1 M353,52.4 l1.2,1.1 l-1.2,1.1" stroke="#3c78c0" stroke-width="0.9" fill="none"/>
<text transform="translate(358.20,56.60) scale(1,1.1)" font-size="8.23" fill="#404040" stroke="#404040" stroke-width="0.06">Merge &amp; Center</text>
<polygon points="422.10,52.45 425.50,52.45 423.80,54.35" fill="#555"/>
<rect x="433.7" y="26.7" width="82.6" height="14.4" fill="#fff" stroke="#c6c6c6" stroke-width="0.9"/>
<text transform="translate(434.90,36.65) scale(1,1.1)" font-size="7.84" fill="#333" stroke="#333" stroke-width="0.06">General</text>
<polygon points="510.90,32.25 514.30,32.25 512.60,34.15" fill="#555"/>
<text transform="translate(437.25,57.30) scale(1,1.1)" font-size="11.00" fill="#555" stroke="#555" stroke-width="0.06">$</text>
<polygon points="449.10,53.05 452.50,53.05 450.80,54.95" fill="#555"/>
<text transform="translate(457.20,57.70) scale(1,1.1)" font-size="9.89" fill="#555" stroke="#555" stroke-width="0.06">%</text>
<path d="M474.6,52.2 h2.6 v2 l-1.4,2.4 h-1 l0.8,-2.2 h-1 z" fill="#555"/>
<line x1="485.8" y1="48.2" x2="485.8" y2="59.4" stroke="#c8c8c8" stroke-width="1"/>
<text x="493" y="53.2" font-size="5.2" fill="#777">.0</text><text x="491.2" y="58.4" font-size="5.2" fill="#777">.00</text>
<path d="M491,51.4 h3.6 M492.4,50 l-1.4,1.4 l1.4,1.4" stroke="#3c78c0" stroke-width="1" fill="none"/>
<text x="505.3" y="53.2" font-size="5.2" fill="#777">.00</text><text x="508.6" y="58.4" font-size="5.2" fill="#777">.0</text>
<path d="M505.4,56.6 h3.4 M507.4,55.2 l1.4,1.4 l-1.4,1.4" stroke="#3c78c0" stroke-width="1" fill="none"/>
<g stroke="#9a9a9a" stroke-width="0.8" fill="#fff"><rect x="536.6" y="25.4" width="18.9" height="15"/></g>
<rect x="542.8" y="25.4" width="3.2" height="3.75" fill="#d4582f"/>
<rect x="542.8" y="29.15" width="5.4" height="3.75" fill="#2f6db5"/>
<rect x="542.8" y="32.9" width="3.6" height="3.75" fill="#d4582f"/>
<rect x="542.8" y="36.65" width="2.4" height="3.75" fill="#2f6db5"/>
<path d="M536.6,29.15 h18.9 M536.6,32.9 h18.9 M536.6,36.65 h18.9 M542.8,25.4 v15 M549.1,25.4 v15" stroke="#9a9a9a" stroke-width="0.8"/>
<rect x="546.8" y="36.2" width="10.6" height="7.6" fill="#fff" stroke="#9a9a9a" stroke-width="0.8"/>
<path d="M549.8,39 h4.6 M549.8,41 h4.6 M553.2,37.6 L551,42.4" stroke="#555" stroke-width="0.8"/>
<text transform="translate(525.29,53.80) scale(1,1.1)" font-size="8.20" fill="#404040" stroke="#404040" stroke-width="0.06">Conditional</text>
<text transform="translate(523.57,65.00) scale(1,1.1)" font-size="8.19" fill="#404040" stroke="#404040" stroke-width="0.06">Formatting</text>
<polygon points="565.40,61.25 568.80,61.25 567.10,63.15" fill="#555"/>
<rect x="580" y="24.8" width="18.6" height="15.6" fill="#fff" stroke="#9a9a9a" stroke-width="0.8"/>
<rect x="584.6" y="28.7" width="14" height="11.7" fill="#c6d9ef"/>
<path d="M580,28.7 h18.6 M580,32.6 h18.6 M580,36.5 h18.6 M584.6,24.8 v15.6 M589.3,24.8 v15.6 M594,24.8 v15.6" stroke="#9a9a9a" stroke-width="0.8"/>
<path d="M600.5,30.5 L592.5,38.2" stroke="#666" stroke-width="2.2"/>
<path d="M586.2,44 q0.8,-4.5 4.5,-6.2 q2.6,0.6 2.4,3 q-2.5,2.6 -6.9,3.2 z" fill="#3c78c0"/>
<text transform="translate(571.55,53.80) scale(1,1.1)" font-size="7.98" fill="#404040" stroke="#404040" stroke-width="0.06">Format as</text>
<text transform="translate(577.57,65.00) scale(1,1.1)" font-size="7.81" fill="#404040" stroke="#404040" stroke-width="0.06">Table</text>
<polygon points="598.10,61.25 601.50,61.25 599.80,63.15" fill="#555"/>
<rect x="613.2" y="23.6" width="19.2" height="14.8" fill="#fff" stroke="#9a9a9a" stroke-width="0.8"/>
<rect x="617.6" y="27.4" width="10.4" height="7.2" fill="#c6d9ef"/>
<path d="M613.2,27.4 h19.2 M613.2,34.6 h19.2 M617.6,23.6 v14.8 M628,23.6 v14.8" stroke="#9a9a9a" stroke-width="0.8"/>
<path d="M635.5,30 L627.5,38" stroke="#666" stroke-width="2.2"/>
<path d="M620.8,44 q0.8,-4.5 4.5,-6.2 q2.6,0.6 2.4,3 q-2.5,2.6 -6.9,3.2 z" fill="#3c78c0"/>
<text transform="translate(616.55,53.80) scale(1,1.1)" font-size="7.94" fill="#404040" stroke="#404040" stroke-width="0.06">Cell</text>
<text transform="translate(610.30,65.00) scale(1,1.1)" font-size="7.71" fill="#404040" stroke="#404040" stroke-width="0.06">Styles</text>
<polygon points="632.60,61.25 636.00,61.25 634.30,63.15" fill="#555"/>
<g fill="#fff" stroke="#8c8c8c" stroke-width="0.8"><rect x="648.2" y="23.4" width="10.4" height="4.1" rx="0.6"/><rect x="648.2" y="35.6" width="10.4" height="7.4" rx="0.6"/></g>
<path d="M653.4,23.4 v4.1 M653.4,35.6 v7.4 M648.2,39.3 h10.4" stroke="#8c8c8c" stroke-width="0.8"/>
<rect x="656.2" y="29.6" width="10.6" height="4" rx="0.8" fill="#aebfd6" stroke="#7f93ad" stroke-width="0.6"/>
<path d="M648.4,31.6 h6.8 M651,29 L648.4,31.6 L651,34.2" stroke="#3c78c0" stroke-width="1.3" fill="none"/>
<text transform="translate(647.27,53.90) scale(1,1.1)" font-size="7.90" fill="#404040" stroke="#404040" stroke-width="0.06">Insert</text>
<polygon points="655.30,60.35 658.70,60.35 657.00,62.25" fill="#555"/>
<g fill="#fff" stroke="#8c8c8c" stroke-width="0.8"><rect x="675.8" y="23.4" width="10.4" height="4.1" rx="0.6"/><rect x="675.8" y="35.6" width="10.4" height="7.4" rx="0.6"/></g>
<path d="M681,23.4 v4.1 M681,35.6 v7.4 M675.8,39.3 h10.4" stroke="#8c8c8c" stroke-width="0.8"/>
<rect x="680" y="29.6" width="6" height="4" rx="0.6" fill="#aebfd6" stroke="#7f93ad" stroke-width="0.6"/>
<path d="M686.6,28 L695,35.4 M695,28 L686.6,35.4" stroke="#d2542f" stroke-width="1.3"/>
<text transform="translate(673.12,53.90) scale(1,1.1)" font-size="8.01" fill="#404040" stroke="#404040" stroke-width="0.06">Delete</text>
<polygon points="682.80,60.35 686.20,60.35 684.50,62.25" fill="#555"/>
<path d="M703,24.6 h15.8 M704.6,23.3 L703,24.6 L704.6,25.9 M717.2,23.3 L718.8,24.6 L717.2,25.9 M702.8,23 v3.2 M719,23 v3.2" stroke="#3c78c0" stroke-width="0.9" fill="none"/>
<rect x="703.2" y="27.6" width="18.6" height="14" rx="0.8" fill="#fff" stroke="#8c8c8c" stroke-width="0.8"/>
<path d="M703.2,31 h18.6 M703.2,37.4 h18.6 M708.4,27.6 v14 M714,27.6 v14 M719,27.6 v14" stroke="#8c8c8c" stroke-width="0.8"/>
<rect x="708.6" y="31.2" width="5.2" height="6" fill="#3c78c0"/>
<text transform="translate(699.70,53.90) scale(1,1.1)" font-size="8.06" fill="#404040" stroke="#404040" stroke-width="0.06">Format</text>
<polygon points="710.80,60.35 714.20,60.35 712.50,62.25" fill="#555"/>
<path d="M743,25.4 h-7.6 l3.9,3.3 l-3.9,3.3 h7.6" stroke="#444" stroke-width="1.1" fill="none"/>
<text transform="translate(746.90,30.60) scale(1,1.1)" font-size="8.04" fill="#404040" stroke="#404040" stroke-width="0.06">AutoSum</text>
<polygon points="785.50,26.25 788.90,26.25 787.20,28.15" fill="#555"/>
<rect x="734.6" y="37.7" width="8.8" height="9" fill="#fff" stroke="#777" stroke-width="0.8"/>
<path d="M739,39.3 v5.4 M736.8,42.6 L739,44.8 L741.2,42.6" stroke="#3c78c0" stroke-width="1.2" fill="none"/>
<text transform="translate(746.90,45.60) scale(1,1.1)" font-size="7.84" fill="#404040" stroke="#404040" stroke-width="0.06">Fill</text>
<polygon points="759.70,41.35 763.10,41.35 761.40,43.25" fill="#555"/>
<path d="M735.6,58.2 L740.6,53 L743.6,56 L738.6,61.2 z" fill="#e57a8a"/>
<path d="M738.6,61.2 h6" stroke="#777" stroke-width="0.7"/>
<text transform="translate(746.90,60.60) scale(1,1.1)" font-size="7.82" fill="#404040" stroke="#404040" stroke-width="0.06">Clear</text>
<polygon points="767.40,56.35 770.80,56.35 769.10,58.25" fill="#555"/>
<text transform="translate(795.60,31.25) scale(1,0.95)" font-size="10.42" fill="#4a7fc0" font-weight="bold">A</text>
<text transform="translate(796.20,41.25) scale(1,1.05)" font-size="10.49" fill="#9a68bd" font-weight="bold">Z</text>
<path d="M805,28.2 h10 l-3.6,4.2 v5 h-2.8 v-5 z" fill="#666"/>
<text transform="translate(793.98,53.80) scale(1,1.1)" font-size="8.16" fill="#404040" stroke="#404040" stroke-width="0.06">Sort &amp;</text>
<text transform="translate(793.67,65.00) scale(1,1.1)" font-size="7.93" fill="#404040" stroke="#404040" stroke-width="0.06">Filter</text>
<polygon points="814.20,61.25 817.60,61.25 815.90,63.15" fill="#555"/>
<g fill="#5e5e5e"><path d="M827.4,29 v-3.4 q0,-1.2 1.2,-1.2 h2.2 q1.2,0 1.2,1.2 v3.4 z"/><path d="M837,29 v-3.4 q0,-1.2 1.2,-1.2 h2.2 q1.2,0 1.2,1.2 v3.4 z"/><path d="M825,40.6 v-8.6 q0,-3 2.4,-3 h4.4 q1.2,0 1.2,1.2 v10.4 z"/><path d="M844,40.6 v-8.6 q0,-3 -2.4,-3 h-4.4 q-1.2,0 -1.2,1.2 v10.4 z"/><rect x="832.6" y="30" width="3.8" height="6"/></g><path d="M825.5,33.5 h18 M825.5,37.2 h18" stroke="#8a8a8a" stroke-width="0.5" opacity="0.6"/>
<text transform="translate(822.19,53.80) scale(1,1.1)" font-size="8.20" fill="#404040" stroke="#404040" stroke-width="0.06">Find &amp;</text>
<text transform="translate(820.51,65.00) scale(1,1.1)" font-size="7.94" fill="#404040" stroke="#404040" stroke-width="0.06">Select</text>
<polygon points="845.70,61.25 849.10,61.25 847.40,63.15" fill="#555"/>
<path d="M870.20,40.6 H862.60 Q861.80,40.6 861.80,39.8 V25.5 Q861.80,24.7 862.60,24.7 H871.00 L875.40,29.1 V35.2" stroke="#6c8fd0" stroke-width="1.05" fill="none"/><path d="M868.00,28 Q868.40,31.6 871.00,33.8 M869.00,31.4 Q867.40,33.8 864.80,35.2 M869.40,32.4 Q871.60,32.6 873.40,33.4" stroke="#6c8fd0" stroke-width="0.85" fill="none"/><rect x="-3.6" y="-1.9" width="7.2" height="3.8" rx="1.9" transform="translate(872.20,40.3) rotate(-45)" stroke="#6c8fd0" stroke-width="1.1" fill="#f3f3f3"/><rect x="-3.6" y="-1.9" width="7.2" height="3.8" rx="1.9" transform="translate(876.60,35.9) rotate(-45)" stroke="#6c8fd0" stroke-width="1.1" fill="none"/>
<path d="M911.40,40.6 H903.80 Q903.00,40.6 903.00,39.8 V25.5 Q903.00,24.7 903.80,24.7 H912.20 L916.60,29.1 V35.2" stroke="#6c8fd0" stroke-width="1.05" fill="none"/><path d="M909.20,28 Q909.60,31.6 912.20,33.8 M910.20,31.4 Q908.60,33.8 906.00,35.2 M910.60,32.4 Q912.80,32.6 914.60,33.4" stroke="#6c8fd0" stroke-width="0.85" fill="none"/><rect x="-3.6" y="-1.9" width="7.2" height="3.8" rx="1.9" transform="translate(913.40,40.3) rotate(-45)" stroke="#6c8fd0" stroke-width="1.1" fill="#f3f3f3"/><rect x="-3.6" y="-1.9" width="7.2" height="3.8" rx="1.9" transform="translate(917.80,35.9) rotate(-45)" stroke="#6c8fd0" stroke-width="1.1" fill="none"/>
<text transform="translate(855.95,54.00) scale(1,1.1)" font-size="7.90" fill="#404040" stroke="#404040" stroke-width="0.06">Create</text>
<text transform="translate(857.29,64.90) scale(1,1.1)" font-size="7.71" fill="#404040" stroke="#404040" stroke-width="0.06">a PDF</text>
<text transform="translate(884.87,54.00) scale(1,1.1)" font-size="7.79" fill="#404040" stroke="#404040" stroke-width="0.06">Create a PDF</text>
<text transform="translate(883.50,64.90) scale(1,1.1)" font-size="8.03" fill="#404040" stroke="#404040" stroke-width="0.06">and Share link</text>
<text transform="translate(7.00,97.20) scale(1,1.1)" font-size="9.21" fill="#333" stroke="#333" stroke-width="0.06">M9</text>
<polygon points="64.80,93.25 68.20,93.25 66.50,95.15" fill="#555"/>
<g fill="#777"><circle cx="83" cy="90.6" r="0.6"/><circle cx="83" cy="93.6" r="0.6"/><circle cx="83" cy="96.6" r="0.6"/></g>
<path d="M102.6,91 L110.6,98.4 M110.6,91 L102.6,98.4" stroke="#999" stroke-width="1"/>
<path d="M127.2,95 L130.2,98 L136.8,91.2" stroke="#999" stroke-width="1.2" fill="none"/>
<text x="150.6" y="98.0" font-size="12" font-style="italic" font-family="Liberation Serif, serif" fill="#4a4a4a" stroke="#4a4a4a" stroke-width="0.2">f</text>
<text x="155.4" y="98.4" font-size="9.6" font-style="italic" font-family="Liberation Serif, serif" fill="#4a4a4a" stroke="#4a4a4a" stroke-width="0.2">x</text>
</svg>
</body></html>
